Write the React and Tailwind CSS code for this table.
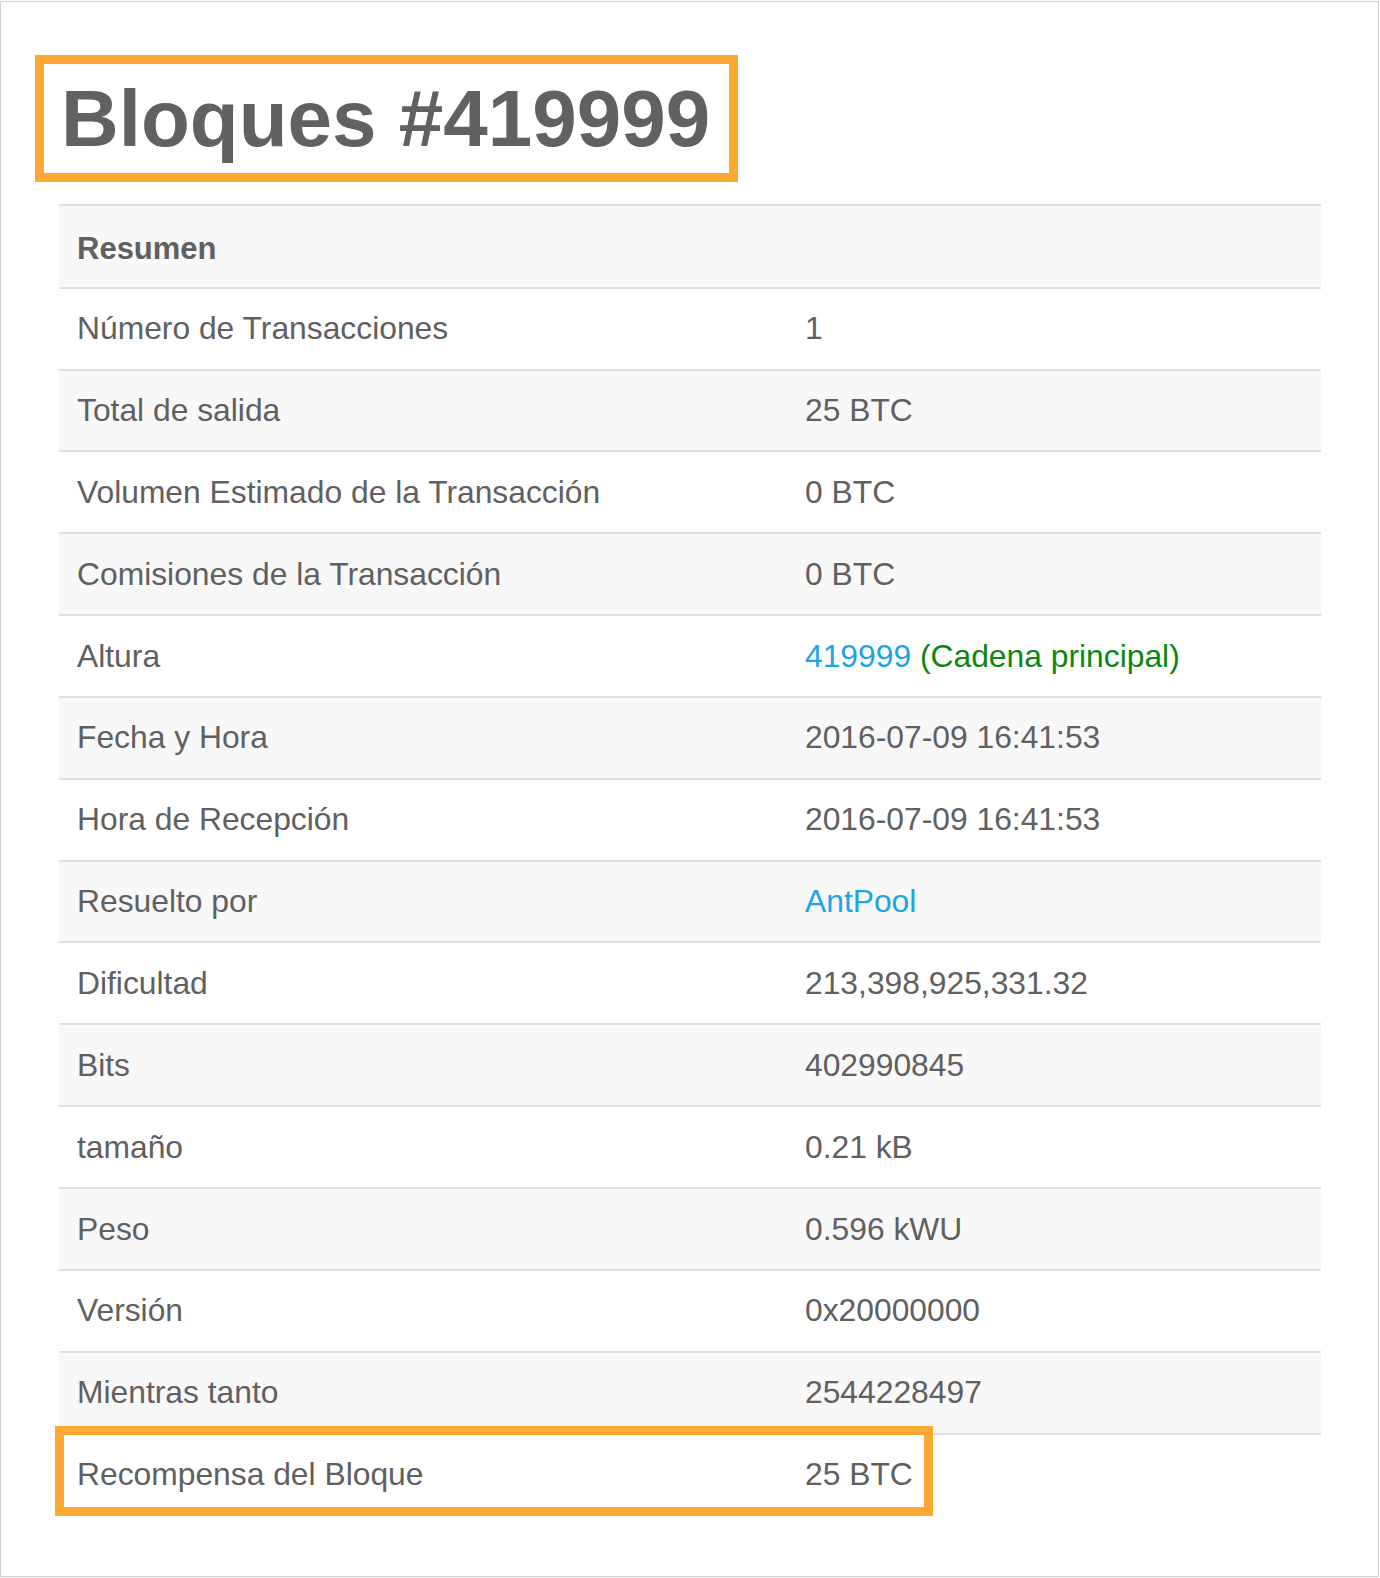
import React from "react";

const rows = [
  ["Número de Transacciones", "1"],
  ["Total de salida", "25 BTC"],
  ["Volumen Estimado de la Transacción", "0 BTC"],
  ["Comisiones de la Transacción", "0 BTC"],
  ["Altura", "altura"],
  ["Fecha y Hora", "2016-07-09 16:41:53"],
  ["Hora de Recepción", "2016-07-09 16:41:53"],
  ["Resuelto por", "antpool"],
  ["Dificultad", "213,398,925,331.32"],
  ["Bits", "402990845"],
  ["tamaño", "0.21 kB"],
  ["Peso", "0.596 kWU"],
  ["Versión", "0x20000000"],
  ["Mientras tanto", "2544228497"],
];

function Value({ v }) {
  if (v === "altura") {
    return (
      <span>
        <span className="text-[#1ba5e2]">419999</span>{" "}
        <span className="text-[#0a870f]">(Cadena principal)</span>
      </span>
    );
  }
  if (v === "antpool") {
    return <span className="text-[#1ba5e2]">AntPool</span>;
  }
  return <span>{v}</span>;
}

export default function App() {
  return (
    <div
      className="w-[1380px] h-[1578px] bg-white pt-px"
      style={{ fontFamily: '"Liberation Sans", Arial, Helvetica, sans-serif' }}
    >
      <div className="w-[1379px] h-[1576px] border border-[#cfcfcf] bg-white text-[#606060]">
        <div className="ml-[34px] mt-[53px] w-[703px] h-[127px] border-[9px] border-[#ffa733] flex items-center pl-[17px]">
          <h1 className="text-[80px] font-bold leading-[92px] text-[#616161] pt-[1px]">
            Bloques #419999
          </h1>
        </div>

        <div className="ml-[58px] mt-[22px] w-[1262px] text-[31.8px]">
          <div className="h-[82.7px] border-t-2 border-[#e0e0e0] bg-[#f8f8f8] flex items-center pl-[18px] pt-[5px] font-bold text-[31px]">
            Resumen
          </div>
          {rows.map(([label, v], i) => (
            <div
              key={label}
              className={
                "h-[81.85px] border-t-2 border-[#e0e0e0] grid grid-cols-[728px_1fr] items-center " +
                (i % 2 === 1 ? "bg-[#f8f8f8]" : "bg-white")
              }
            >
              <div className="pl-[18px] pt-[1px]">{label}</div>
              <div className="pl-[18px] pt-[1px]">
                <Value v={v} />
              </div>
            </div>
          ))}
          <div className="relative h-[81.5px] border-t-2 border-[#e0e0e0] grid grid-cols-[728px_1fr] items-center bg-white">
            <div className="pl-[18px] pt-[1px]">Recompensa del Bloque</div>
            <div className="pl-[18px] pt-[1px]">25 BTC</div>
            <div className="absolute left-[-4px] top-[-9px] w-[878px] h-[90px] border-[9px] border-[#ffa733] pointer-events-none" />
          </div>
        </div>
      </div>
    </div>
  );
}
